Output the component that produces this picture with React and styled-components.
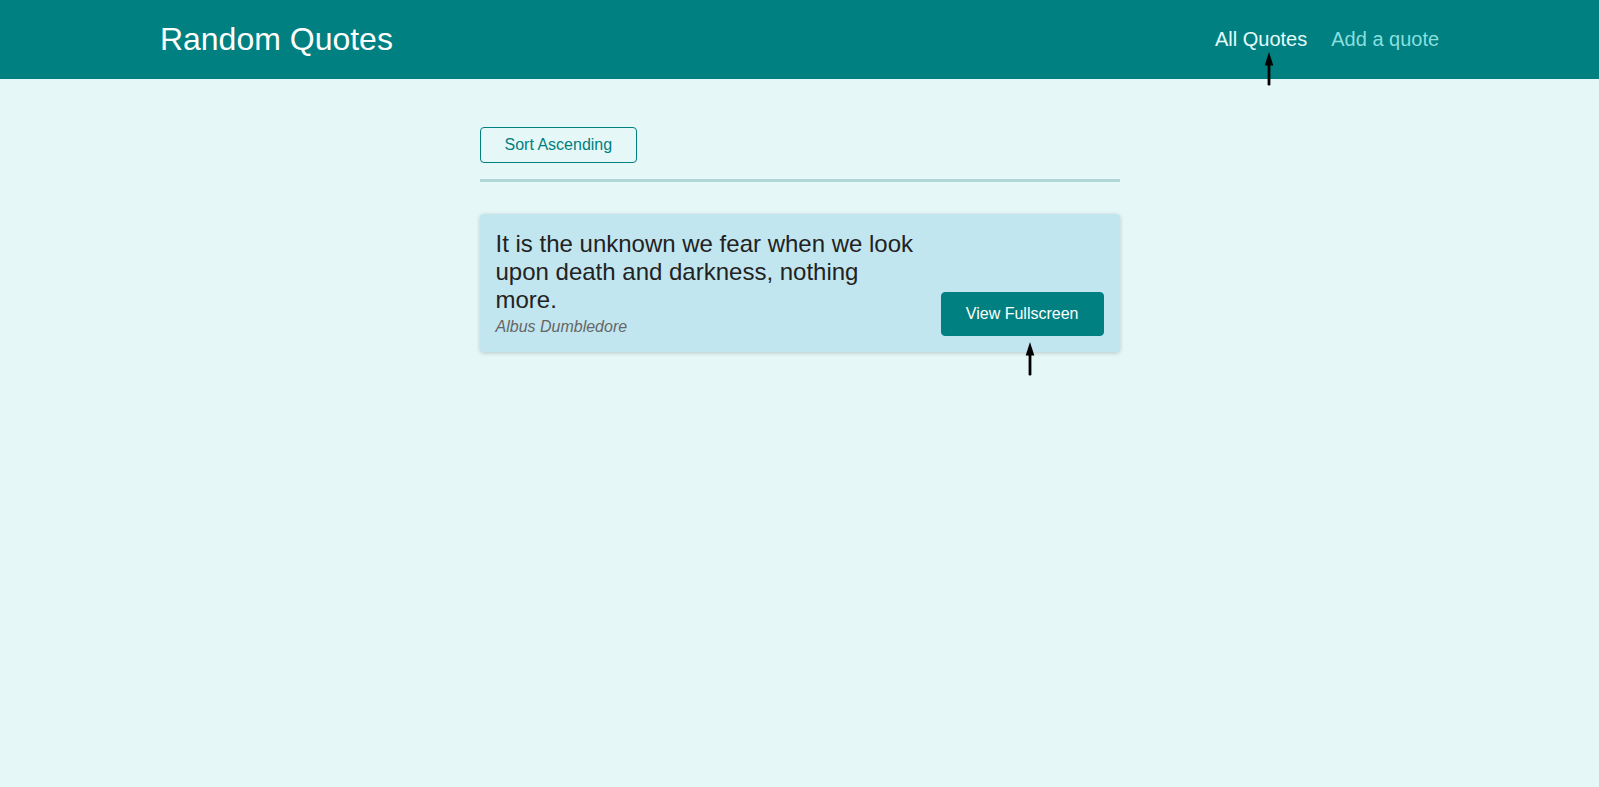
import React from "react";
import styled, { createGlobalStyle } from "styled-components";

const GlobalStyle = createGlobalStyle`
  html, body {
    margin: 0;
    padding: 0;
    background: #e6f7f7;
    font-family: "Liberation Sans", Arial, sans-serif;
  }
  * { box-sizing: border-box; }
`;

const Page = styled.div`
  position: relative;
  min-height: 100vh;
  background: #e6f7f7;
`;

const Header = styled.header`
  height: 79px;
  background: #008080;
  padding: 0 10%;
  display: flex;
  align-items: center;
  justify-content: space-between;
`;

const Logo = styled.div`
  color: #ffffff;
  font-size: 32px;
`;

const Nav = styled.nav`
  display: flex;
  align-items: center;
  gap: 24px;
`;

const NavLink = styled.a`
  font-size: 20px;
  text-decoration: none;
  cursor: pointer;
  color: ${(p) => (p.$active ? "#e6fcfc" : "#88dfdf")};
`;

const Main = styled.main`
  width: 640px;
  margin: 0 auto;
  padding-top: 48px;
`;

const Sorting = styled.div`
  padding-bottom: 16px;
  border-bottom: 3px solid #b0d6d6;
`;

const OutlineButton = styled.button`
  font: inherit;
  font-size: 16px;
  color: #008080;
  background: transparent;
  border: 1px solid #008080;
  border-radius: 4px;
  padding: 8px 24px;
  line-height: 18px;
  cursor: pointer;
`;

const List = styled.ul`
  list-style: none;
  margin: 32px 0 0;
  padding: 0;
`;

const Card = styled.li`
  display: flex;
  align-items: flex-end;
  justify-content: space-between;
  background: #c2e6f0;
  border-radius: 4px;
  box-shadow: 0 1px 4px rgba(0, 0, 0, 0.2);
  padding: 16px;
`;

const Figure = styled.figure`
  flex: 1;
  max-width: 424px;
  margin: 0;
`;

const Quote = styled.blockquote`
  margin: 0;
  font-size: 24px;
  color: #222222;
`;

const Author = styled.figcaption`
  margin-top: 4px;
  font-size: 16px;
  font-style: italic;
  color: #666666;
`;

const SolidButton = styled.button`
  flex: none;
  font: inherit;
  font-size: 16px;
  line-height: 18px;
  color: #ffffff;
  background: #008080;
  border: 1px solid #008080;
  border-radius: 4px;
  padding: 12px 24px;
  cursor: pointer;
`;

const ArrowWrap = styled.div`
  position: absolute;
  left: ${(p) => p.$x}px;
  top: ${(p) => p.$y}px;
  width: 10px;
  height: 34px;
  pointer-events: none;
`;

const Arrow = ({ x, y }) => (
  <ArrowWrap $x={x} $y={y}>
    <svg width="10" height="34" viewBox="0 0 10 34">
      <polygon points="5,0 9.3,13.5 0.7,13.5" fill="#000" />
      <rect x="3.6" y="12" width="2.8" height="21.5" rx="1.2" fill="#000" />
    </svg>
  </ArrowWrap>
);

export default function App() {
  return (
    <Page>
      <GlobalStyle />
      <Header>
        <Logo>Random Quotes</Logo>
        <Nav>
          <NavLink $active>All Quotes</NavLink>
          <NavLink>Add a quote</NavLink>
        </Nav>
      </Header>
      <Main>
        <Sorting>
          <OutlineButton>Sort Ascending</OutlineButton>
        </Sorting>
        <List>
          <Card>
            <Figure>
              <Quote>
                It is the unknown we fear when we look upon death and darkness,
                nothing more.
              </Quote>
              <Author>Albus Dumbledore</Author>
            </Figure>
            <SolidButton>View Fullscreen</SolidButton>
          </Card>
        </List>
      </Main>
      <Arrow x={1264} y={52} />
      <Arrow x={1025} y={342} />
    </Page>
  );
}
